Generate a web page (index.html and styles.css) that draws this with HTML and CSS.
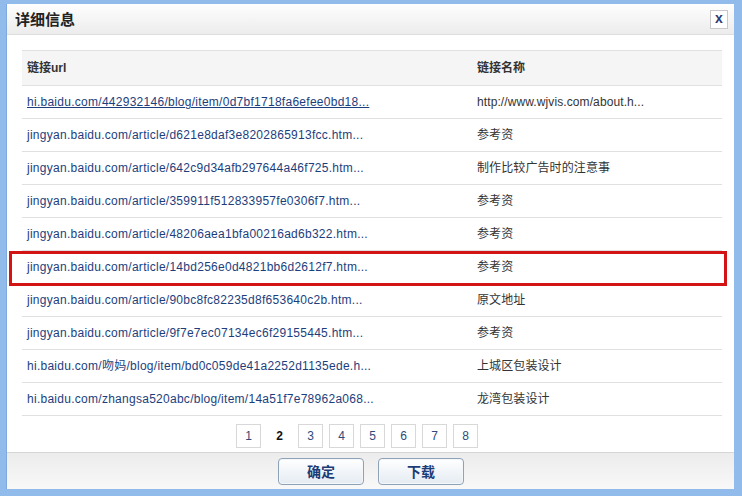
FILE: index.html
```html
<!DOCTYPE html>
<html lang="zh-CN">
<head>
<meta charset="utf-8">
<title>详细信息</title>
<link rel="stylesheet" href="styles.css">
</head>
<body>
<div class="frame">
  <div class="window">
    <div class="titlebar">
      <span class="title">详细信息</span>
      <span class="close">x</span>
    </div>
    <div class="content">
      <table class="links">
        <thead>
          <tr><th class="c1">链接url</th><th class="c2">链接名称</th></tr>
        </thead>
        <tbody>
          <tr><td class="c1"><a class="hover">hi.baidu.com/442932146/blog/item/0d7bf1718fa6efee0bd18...</a></td><td class="c2">http://www.wjvis.com/about.h...</td></tr>
          <tr><td class="c1"><a>jingyan.baidu.com/article/d621e8daf3e8202865913fcc.htm...</a></td><td class="c2">参考资</td></tr>
          <tr><td class="c1"><a>jingyan.baidu.com/article/642c9d34afb297644a46f725.htm...</a></td><td class="c2">制作比较广告时的注意事</td></tr>
          <tr><td class="c1"><a>jingyan.baidu.com/article/359911f512833957fe0306f7.htm...</a></td><td class="c2">参考资</td></tr>
          <tr><td class="c1"><a>jingyan.baidu.com/article/48206aea1bfa00216ad6b322.htm...</a></td><td class="c2">参考资</td></tr>
          <tr><td class="c1"><a>jingyan.baidu.com/article/14bd256e0d4821bb6d2612f7.htm...</a></td><td class="c2">参考资</td></tr>
          <tr><td class="c1"><a>jingyan.baidu.com/article/90bc8fc82235d8f653640c2b.htm...</a></td><td class="c2">原文地址</td></tr>
          <tr><td class="c1"><a>jingyan.baidu.com/article/9f7e7ec07134ec6f29155445.htm...</a></td><td class="c2">参考资</td></tr>
          <tr><td class="c1"><a>hi.baidu.com/吻妈/blog/item/bd0c059de41a2252d1135ede.h...</a></td><td class="c2">上城区包装设计</td></tr>
          <tr><td class="c1"><a>hi.baidu.com/zhangsa520abc/blog/item/14a51f7e78962a068...</a></td><td class="c2">龙湾包装设计</td></tr>
        </tbody>
      </table>
      <div class="pager">
        <span class="page">1</span>
        <span class="page current">2</span>
        <span class="page">3</span>
        <span class="page">4</span>
        <span class="page">5</span>
        <span class="page">6</span>
        <span class="page">7</span>
        <span class="page">8</span>
      </div>
    </div>
    <div class="footer">
      <button class="btn">确定</button>
      <button class="btn">下载</button>
    </div>
  </div>
  <div class="highlight"></div>
</div>
</body>
</html>
```
FILE: styles.css
```css
* { box-sizing: border-box; }
html, body { margin: 0; padding: 0; }
body {
  width: 742px;
  height: 496px;
  overflow: hidden;
  font-family: "Liberation Sans", Arial, "Noto Sans CJK SC", sans-serif;
  font-size: 12px;
  color: #333;
}
.frame {
  position: relative;
  width: 742px;
  height: 496px;
  background: #91bbea;
  padding: 4px 8px 7px 6px;
}
.window {
  width: 100%;
  height: 100%;
  background: #fff;
  border-left: 1px solid #7eaadf;
  display: flex;
  flex-direction: column;
}
.titlebar {
  height: 31px;
  flex: none;
  display: flex;
  align-items: center;
  justify-content: space-between;
  padding: 0 6px 0 8px;
  background: linear-gradient(#fefefe, #ececec);
  border-bottom: 1px solid #dedede;
}
.title {
  font-family: "Noto Sans CJK SC", sans-serif;
  font-weight: bold;
  font-size: 15px;
  color: #222;
  margin-top: -2px;
}
.close {
  width: 18px;
  height: 19px;
  margin-top: 1px;
  border: 1px solid #c9c9c9;
  background: #fff;
  color: #2a3c78;
  font-weight: bold;
  font-size: 14px;
  line-height: 15px;
  text-align: center;
}
.content {
  flex: 1;
  padding: 15px 12px 0 15px;
}
.links {
  width: 700px;
  border-collapse: collapse;
  table-layout: fixed;
}
.links th, .links td {
  text-align: left;
  padding: 0 0 0 5px;
  white-space: nowrap;
  overflow: hidden;
  line-height: 16px;
  border-top: 1px solid #e0e0e0;
  border-bottom: 1px solid #e0e0e0;
}
.links th {
  height: 35px;
  background: #f5f5f5;
  font-weight: bold;
  color: #333;
}
.links td { height: 33px; }
.links td.c2 { letter-spacing: 0.1px; }
.c1 { width: 450px; }
.links a {
  color: #1d3e7c;
  text-decoration: none;
  letter-spacing: 0.27px;
}
.links a.hover { text-decoration: underline; }
.pager {
  display: flex;
  gap: 6px;
  margin-top: 8px;
  padding-left: 214px;
}
.page {
  width: 25px;
  height: 24px;
  border: 1px solid #d8d8d8;
  color: #2d4a7c;
  display: flex;
  align-items: center;
  justify-content: center;
}
.page.current {
  border-color: transparent;
  color: #111;
  font-weight: bold;
}
.footer {
  height: 37px;
  flex: none;
  border-top: 1px solid #d6d6d6;
  background: linear-gradient(#ececec, #f8f8f8);
  display: flex;
  justify-content: center;
  align-items: center;
  gap: 14px;
  padding-left: 1px;
}
.btn {
  width: 86px;
  height: 27px;
  border: 1px solid #8fa3b8;
  border-radius: 4px;
  background: linear-gradient(#ffffff, #e4ebf2);
  box-shadow: inset 0 0 0 1px #f4f7fa;
  font-family: "Noto Sans CJK SC", sans-serif;
  font-weight: bold;
  font-size: 14px;
  color: #1c3c78;
  padding: 0;
}
.highlight {
  position: absolute;
  left: 9px;
  top: 251px;
  width: 718px;
  height: 35px;
  border: 3px solid #d21414;
}
```
